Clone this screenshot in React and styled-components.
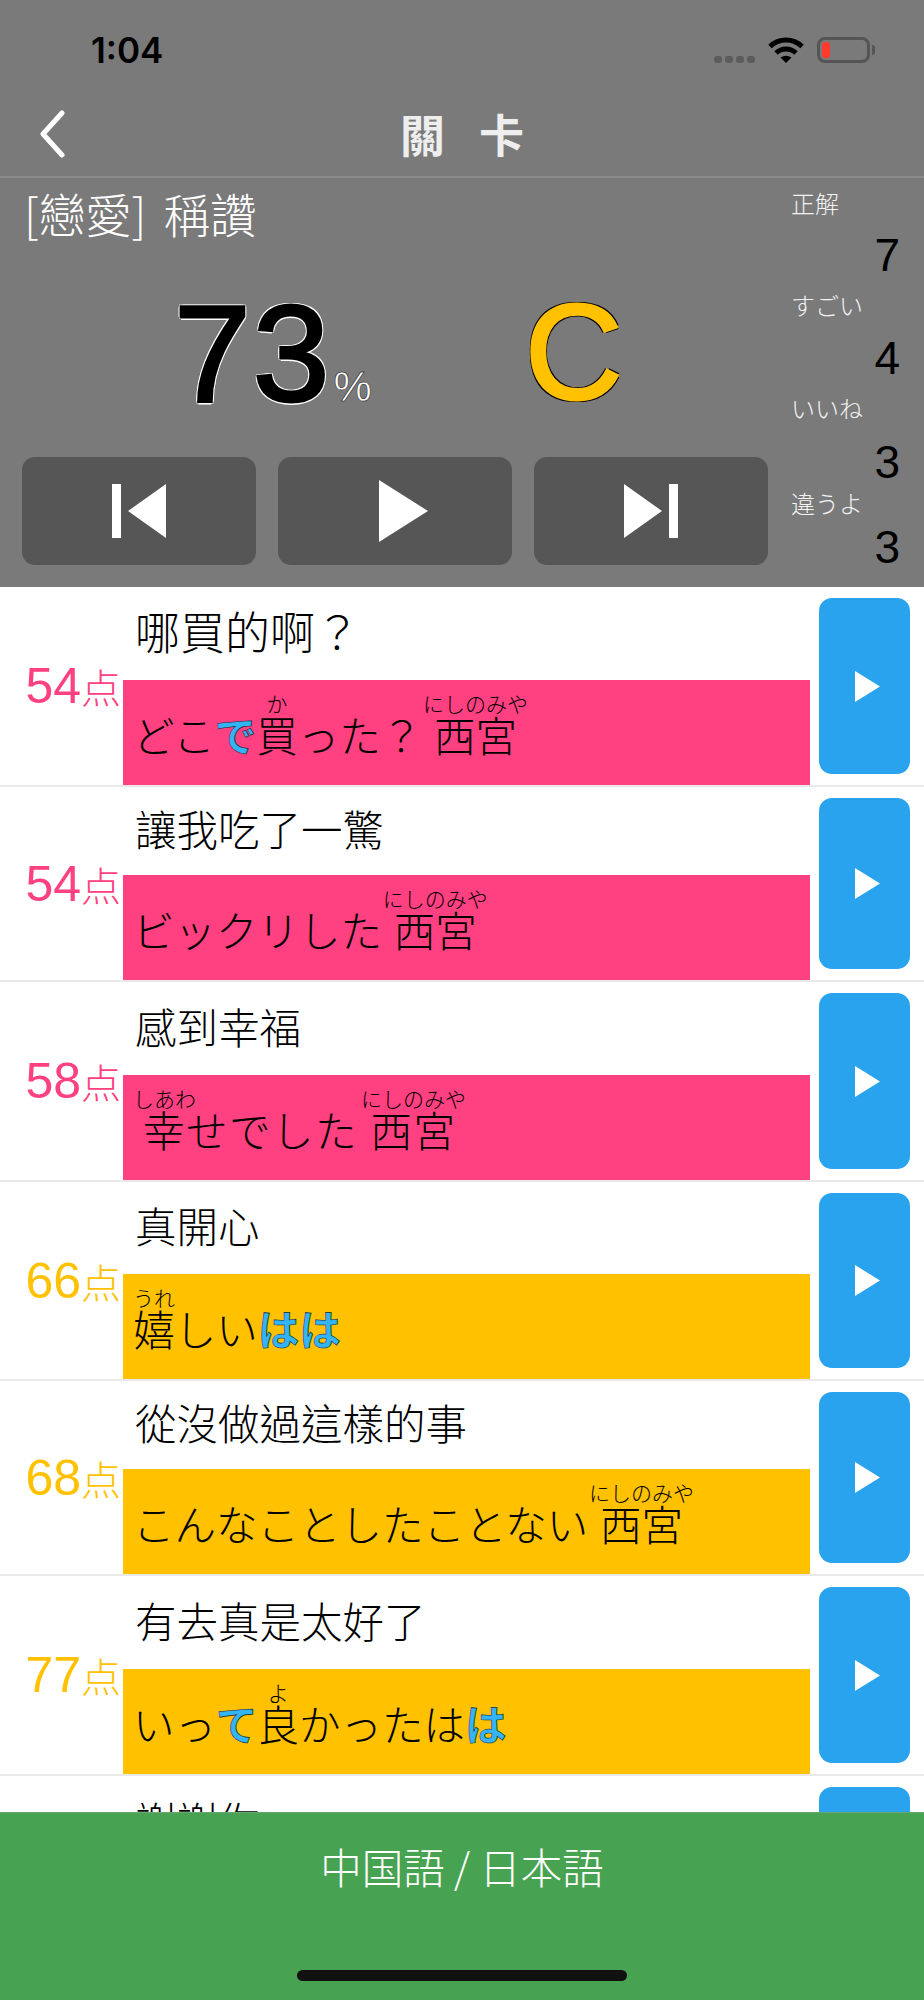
import styled, { createGlobalStyle } from "styled-components";

const GlobalStyle = createGlobalStyle`
  html, body {
    margin: 0;
    padding: 0;
    background: #fff;
  }
  * {
    box-sizing: border-box;
  }
`;

const jpFont = `"Noto Sans CJK JP", "Noto Sans CJK TC", sans-serif`;
const tcFont = `"Noto Sans CJK TC", "Noto Sans CJK JP", sans-serif`;
const latinFont = `"Liberation Sans", Arial, sans-serif`;

const pink = "#ff4081";
const amber = "#ffc100";

const Screen = styled.div`
  width: 924px;
  height: 2000px;
  display: flex;
  flex-direction: column;
  overflow: hidden;
  background: #fff;
`;

const Header = styled.header`
  flex: none;
  height: 587px;
  background: #7a7a7a;
`;

const StatusBar = styled.div`
  height: 88px;
  display: flex;
  justify-content: space-between;
  padding: 37px 54px 0 91px;
`;

const Clock = styled.div`
  font-family: Inter, sans-serif;
  font-weight: 600;
  font-size: 35px;
  line-height: 26px;
  color: #000;
`;

const StatusIcons = styled.div`
  display: flex;
  align-items: flex-start;
`;

const Dots = styled.div`
  display: flex;
  gap: 3px;
  margin: 19px 13px 0 0;
`;

const Dot = styled.i`
  display: block;
  width: 8px;
  height: 7px;
  border-radius: 3px;
  background: #5c5c5c;
`;

const Battery = styled.div`
  position: relative;
  width: 53px;
  height: 26px;
  margin-left: 13px;
  padding: 2px;
  border: 3px solid #555;
  border-radius: 8px;
  &::before {
    content: "";
    display: block;
    width: 8px;
    height: 16px;
    border-radius: 3px;
    background: #ff3b30;
  }
  &::after {
    content: "";
    position: absolute;
    right: -8px;
    top: 5px;
    width: 3px;
    height: 10px;
    border-radius: 0 3px 3px 0;
    background: #555;
  }
`;

const NavBar = styled.nav`
  height: 90px;
  display: grid;
  grid-template-columns: 1fr auto 1fr;
  align-items: center;
  padding: 4px 38px 0 38px;
  border-bottom: 2px solid #8a8a8a;
`;

const NavTitle = styled.h1`
  margin: 0;
  font-family: ${tcFont};
  font-weight: 700;
  font-size: 45px;
  line-height: 50px;
  word-spacing: 24px;
  color: #eee;
`;

const Summary = styled.div`
  height: 409px;
  display: grid;
  grid-template-columns: 768px 1fr;
`;

const SummaryMain = styled.div`
  display: flex;
  flex-direction: column;
  padding: 10px 0 22px 22px;
`;

const Lesson = styled.div`
  font-family: ${tcFont};
  font-weight: 300;
  font-size: 46.500px;
  line-height: 50px;
  word-spacing: 7px;
  color: #fff;
  padding-left: 2px;
`;

const ScoreRow = styled.div`
  flex: 1;
  display: flex;
  align-items: center;
  padding: 10px 0 0 152px;
`;

const Percent = styled.div`
  width: 351px;
  font-family: ${latinFont};
  font-size: 138px;
  line-height: 130px;
  letter-spacing: 2px;
  color: #000;
  -webkit-text-stroke: 3px #000;
  text-shadow: -2px -2px 0 #fff, 2px -2px 0 #fff, -2px 2px 0 #fff, 2px 2px 0 #fff,
    0 -2.500px 0 #fff, 0 2.500px 0 #fff, -2.500px 0 0 #fff, 2.500px 0 0 #fff;
  small {
    font-size: 43px;
    line-height: 0;
    letter-spacing: 0;
    color: #fff;
    -webkit-text-stroke: 0.500px #000;
    text-shadow: none;
    margin-left: 2px;
  }
`;

const Grade = styled.div`
  font-family: ${latinFont};
  font-size: 135px;
  line-height: 130px;
  color: ${amber};
  -webkit-text-stroke: 3px ${amber};
  text-shadow: -2px -2px 0 #000, 2px -2px 0 #000, -2px 2px 0 #000, 2px 2px 0 #000;
`;

const Controls = styled.div`
  display: grid;
  grid-template-columns: repeat(3, 234px);
  gap: 22px;
`;

const ControlButton = styled.button`
  height: 108px;
  border: 0;
  padding: 0 0 0 ${(p) => p.$inset || 0}px;
  border-radius: 13px;
  background: #565656;
  display: flex;
  align-items: center;
  justify-content: center;
`;

const Stats = styled.div`
  display: flex;
  flex-direction: column;
  padding: 7px 24px 0 23px;
`;

const Stat = styled.div`
  display: flex;
  flex-direction: column;
  height: ${(p) => p.$h}px;
`;

const StatLabel = styled.div`
  font-family: ${jpFont};
  font-weight: 300;
  font-size: 24px;
  line-height: 36px;
  color: #f2f2f2;
`;

const StatValue = styled.div`
  font-family: ${latinFont};
  font-size: 46px;
  line-height: 46px;
  margin-top: ${(p) => p.$gap}px;
  text-align: right;
  color: #000;
`;

const List = styled.div`
  flex: 1;
  min-height: 0;
  overflow: hidden;
`;

const Row = styled.div`
  height: ${(p) => p.$h}px;
  display: grid;
  grid-template-columns: 123px 687px 1fr;
  border-bottom: 2px solid #e9e9e9;
  background: #fff;
`;

const Points = styled.div`
  display: flex;
  align-items: center;
  justify-content: flex-end;
  padding-right: 2px;
  font-family: ${latinFont};
  font-size: 50px;
  color: ${(p) => (p.$score < 60 ? pink : amber)};
  span {
    font-family: ${jpFont};
    font-weight: 300;
    font-size: 40px;
  }
`;

const Sentence = styled.div`
  display: flex;
  flex-direction: column;
  min-width: 0;
`;

const Chinese = styled.div`
  flex: 1;
  display: flex;
  align-items: center;
  padding: 0 0 6px 12px;
  font-family: ${tcFont};
  font-weight: 300;
  font-size: ${(p) => p.$size || 41.5}px;
  color: #000;
`;

const Japanese = styled.div`
  flex: none;
  height: 105px;
  padding: 19px 0 0 10px;
  background: ${(p) => (p.$score < 60 ? pink : amber)};
  font-family: ${jpFont};
  font-weight: 300;
  font-size: 41.500px;
  line-height: 70px;
  letter-spacing: ${(p) => p.$track || 0}px;
  word-spacing: -3px;
  color: #000;
  white-space: pre;
  ruby {
    ruby-align: center;
  }
  rt {
    font-size: 21px;
    line-height: 20px;
    font-weight: 300;
    letter-spacing: 0;
  }
`;

const Hit = styled.span`
  font-weight: 700;
  color: #33b5f5;
  -webkit-text-stroke: 0.6px #123;
`;

const PlayCell = styled.div`
  padding: 11px 14px 11px 9px;
`;

const PlayButton = styled.button`
  width: 100%;
  height: 100%;
  border: 0;
  padding: 0 0 0 6px;
  border-radius: 13px;
  background: #2aa3ef;
  display: flex;
  align-items: center;
  justify-content: center;
`;

const Footer = styled.footer`
  flex: none;
  height: 188px;
  background: #47a252;
  border-top: 1px solid #6aa873;
  display: flex;
  flex-direction: column;
  align-items: center;
`;

const Language = styled.div`
  margin-top: 26px;
  font-family: ${jpFont};
  font-weight: 300;
  font-size: 41.5px;
  line-height: 54px;
  color: #fff;
`;

const HomeBar = styled.div`
  width: 330px;
  height: 11px;
  margin-top: 77px;
  border-radius: 6px;
  background: #111;
`;

const PrevIcon = () => (
  <svg width="54" height="54" viewBox="0 0 54 54">
    <path fill="#fff" d="M0 0h9v54H0zM54 0v54L16 27z" />
  </svg>
);

const BigPlayIcon = () => (
  <svg width="49" height="62" viewBox="0 0 49 62">
    <path fill="#fff" d="M0 0l49 31L0 62z" />
  </svg>
);

const NextIcon = () => (
  <svg width="54" height="54" viewBox="0 0 54 54">
    <path fill="#fff" d="M45 0h9v54h-9zM0 0v54l38-27z" />
  </svg>
);

const SmallPlayIcon = () => (
  <svg width="25" height="31" viewBox="0 0 25 31">
    <path fill="#fff" d="M0 0l25 15.500L0 31z" />
  </svg>
);

const WifiIcon = () => (
  <svg width="36" height="26" viewBox="0 0 36 26">
    <g fill="none" stroke="#000" strokeWidth="5">
      <path d="M2 9.500a23 23 0 0 1 32 0" />
      <path d="M8 16a14.500 14.500 0 0 1 20 0" />
    </g>
    <path d="M12.500 20.500Q18 17 23.500 20.500L18 26z" />
  </svg>
);

const BackIcon = () => (
  <svg width="28" height="48" viewBox="0 0 28 48">
    <path d="M24 3L5 24l19 21" fill="none" stroke="#fff" strokeWidth="5" strokeLinecap="round" strokeLinejoin="round" />
  </svg>
);

const stats = [
  { label: "正解", value: 7, h: 102, gap: 11 },
  { label: "すごい", value: 4, h: 103, gap: 12 },
  { label: "いいね", value: 3, h: 95, gap: 13 },
  { label: "違うよ", value: 3, h: 80, gap: 3 },
];

const nishinomiya = <ruby>西宮<rt>にしのみや</rt></ruby>;

const rows = [
  {
    score: 54, h: 200, size: 45, zh: "哪買的啊？",
    ja: <>どこ<Hit>で</Hit><ruby>買<rt>か</rt></ruby>った？ {nishinomiya}</>,
  },
  {
    score: 54, h: 195, zh: "讓我吃了一驚",
    ja: <>ビックリした {nishinomiya}</>,
  },
  {
    score: 58, h: 200, zh: "感到幸福", track: 1.5,
    ja: <><ruby>幸<rt>しあわ</rt></ruby>せでした {nishinomiya}</>,
  },
  {
    score: 66, h: 199, zh: "真開心",
    ja: <><ruby>嬉<rt>うれ</rt></ruby>しい<Hit>はは</Hit></>,
  },
  {
    score: 68, h: 195, zh: "從沒做過這樣的事",
    ja: <>こんなことしたことない {nishinomiya}</>,
  },
  {
    score: 77, h: 200, zh: "有去真是太好了",
    ja: <>いっ<Hit>て</Hit><ruby>良<rt>よ</rt></ruby>かったは<Hit>は</Hit></>,
  },
  {
    score: 80, h: 200, zh: "謝謝你",
    ja: <>ありがとう</>,
  },
];

export default function App() {
  return (
    <Screen>
      <GlobalStyle />
      <Header>
        <StatusBar>
          <Clock>1:04</Clock>
          <StatusIcons>
            <Dots>
              <Dot /><Dot /><Dot /><Dot />
            </Dots>
            <WifiIcon />
            <Battery />
          </StatusIcons>
        </StatusBar>
        <NavBar>
          <BackIcon />
          <NavTitle>關 卡</NavTitle>
        </NavBar>
        <Summary>
          <SummaryMain>
            <Lesson>[戀愛] 稱讚</Lesson>
            <ScoreRow>
              <Percent>73<small>%</small></Percent>
              <Grade>C</Grade>
            </ScoreRow>
            <Controls>
              <ControlButton><PrevIcon /></ControlButton>
              <ControlButton $inset={16}><BigPlayIcon /></ControlButton>
              <ControlButton><NextIcon /></ControlButton>
            </Controls>
          </SummaryMain>
          <Stats>
            {stats.map((s) => (
              <Stat key={s.label} $h={s.h}>
                <StatLabel>{s.label}</StatLabel>
                <StatValue $gap={s.gap}>{s.value}</StatValue>
              </Stat>
            ))}
          </Stats>
        </Summary>
      </Header>
      <List>
        {rows.map((r) => (
          <Row key={r.zh} $h={r.h}>
            <Points $score={r.score}>{r.score}<span>点</span></Points>
            <Sentence>
              <Chinese $size={r.size}>{r.zh}</Chinese>
              <Japanese $score={r.score} $track={r.track}>{r.ja}</Japanese>
            </Sentence>
            <PlayCell>
              <PlayButton><SmallPlayIcon /></PlayButton>
            </PlayCell>
          </Row>
        ))}
      </List>
      <Footer>
        <Language>中国語 / 日本語</Language>
        <HomeBar />
      </Footer>
    </Screen>
  );
}
